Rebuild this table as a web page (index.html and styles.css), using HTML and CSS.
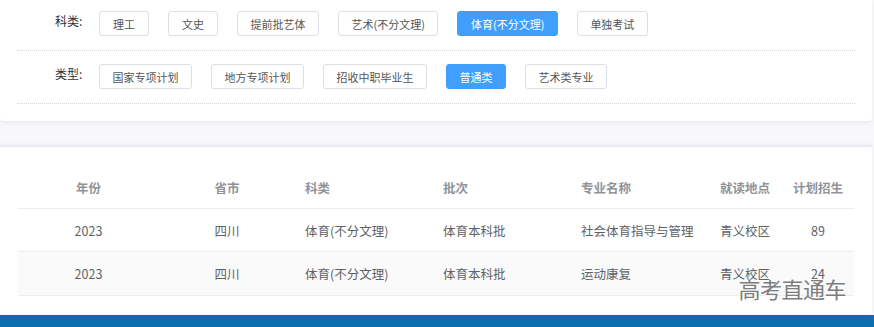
FILE: index.html
```html
<!DOCTYPE html>
<html lang="zh-CN">
<head>
    <meta charset="UTF-8">
    <title>招生计划</title>
    <link rel="stylesheet" href="styles.css">
</head>
<body>
    <div class="filter-card">
        <div class="filter-row">
            <span class="filter-label">科类:</span>
            <div class="filter-options">
                <button class="filter-btn">理工</button>
                <button class="filter-btn">文史</button>
                <button class="filter-btn">提前批艺体</button>
                <button class="filter-btn">艺术(不分文理)</button>
                <button class="filter-btn active">体育(不分文理)</button>
                <button class="filter-btn">单独考试</button>
            </div>
        </div>
        <div class="filter-row">
            <span class="filter-label">类型:</span>
            <div class="filter-options">
                <button class="filter-btn">国家专项计划</button>
                <button class="filter-btn">地方专项计划</button>
                <button class="filter-btn">招收中职毕业生</button>
                <button class="filter-btn active">普通类</button>
                <button class="filter-btn">艺术类专业</button>
            </div>
        </div>
    </div>

    <div class="table-card">
        <div class="plan-table">
            <div class="plan-row head">
                <div class="cell center">年份</div>
                <div class="cell center">省市</div>
                <div class="cell">科类</div>
                <div class="cell">批次</div>
                <div class="cell">专业名称</div>
                <div class="cell">就读地点</div>
                <div class="cell center">计划招生</div>
            </div>
            <div class="plan-row">
                <div class="cell center">2023</div>
                <div class="cell center">四川</div>
                <div class="cell">体育(不分文理)</div>
                <div class="cell">体育本科批</div>
                <div class="cell">社会体育指导与管理</div>
                <div class="cell">青义校区</div>
                <div class="cell center">89</div>
            </div>
            <div class="plan-row striped">
                <div class="cell center">2023</div>
                <div class="cell center">四川</div>
                <div class="cell">体育(不分文理)</div>
                <div class="cell">体育本科批</div>
                <div class="cell">运动康复</div>
                <div class="cell">青义校区</div>
                <div class="cell center">24</div>
            </div>
        </div>
        <div class="watermark">高考直通车</div>
    </div>

    <div class="footer-bar"></div>
</body>
</html>
```

FILE: styles.css
```css
body {
    margin: 0;
    background: #f8f8fa;
    font-family: "Noto Sans CJK SC", "Noto Sans", sans-serif;
}

.filter-card {
    margin-right: 2px;
    padding: 0 17px 17px;
    background: #ffffff;
    border-radius: 0 0 4px 4px;
    box-shadow: 0 2px 5px rgba(0, 0, 0, 0.06);
}

.filter-row {
    display: flex;
    padding: 13px 0 14px;
    border-bottom: 1px dotted #d8d8d8;
}

.filter-row:first-child {
    padding-top: 11px;
}

.filter-label {
    width: 44px;
    padding-left: 38px;
    font-size: 12px;
    line-height: 20px;
    color: #333333;
}

.filter-options {
    display: flex;
    gap: 19px;
}

.filter-btn {
    height: 25px;
    padding: 0 12.5px;
    min-width: 50px;
    border: 1px solid #dcdfe6;
    border-radius: 3px;
    background: #ffffff;
    color: #555555;
    font-family: inherit;
    font-size: 11px;
    cursor: pointer;
}

.filter-btn.active {
    background: #409eff;
    border-color: #409eff;
    color: #ffffff;
}

.table-card {
    position: relative;
    margin: 25px 2px 0 0;
    padding: 20px 18px 18px;
    background: #ffffff;
    border-top: 1px solid #e6e6f0;
    box-shadow: 0 -1px 3px rgba(120, 120, 180, 0.12);
}

.plan-row {
    display: grid;
    grid-template-columns: 141px 136px 138px 138px 139px 72px 72px;
    height: 42px;
    align-items: center;
    border-bottom: 1px solid #ebeef5;
    font-size: 12.5px;
    color: #606266;
}

.plan-row.head {
    height: 41px;
    color: #909399;
    font-weight: bold;
}

.plan-row.striped {
    height: 43px;
    background: #fafafa;
}

.cell {
    padding-left: 10px;
    white-space: nowrap;
}

.cell.center {
    padding-left: 0;
    text-align: center;
}

.watermark {
    position: absolute;
    top: 125px;
    right: 26px;
    font-size: 22px;
    color: #7d7d7d;
    letter-spacing: -0.5px;
    text-shadow: 0 0 2px #ffffff;
}

.footer-bar {
    height: 60px;
    margin-top: 1px;
    background: #0a6eae;
}
```
